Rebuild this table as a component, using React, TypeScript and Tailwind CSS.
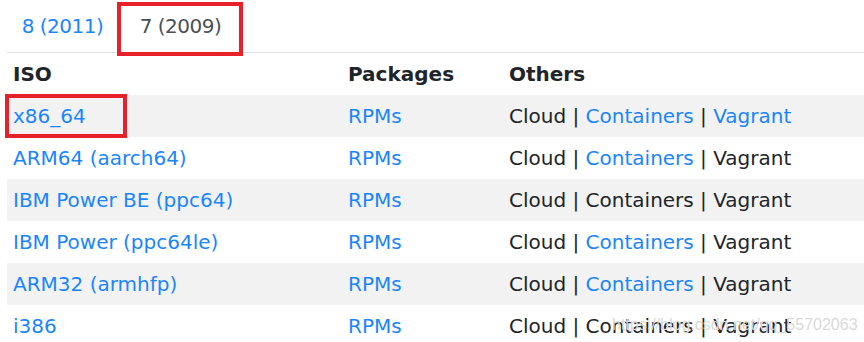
import React from "react";

const blue = "text-[#1b85ff]";

type Row = { iso: string; containers: boolean; vagrant: boolean; striped: boolean };

const rows: Row[] = [
  { iso: "x86_64", containers: true, vagrant: true, striped: true },
  { iso: "ARM64 (aarch64)", containers: true, vagrant: false, striped: false },
  { iso: "IBM Power BE (ppc64)", containers: false, vagrant: false, striped: true },
  { iso: "IBM Power (ppc64le)", containers: true, vagrant: false, striped: false },
  { iso: "ARM32 (armhfp)", containers: true, vagrant: false, striped: true },
  { iso: "i386", containers: false, vagrant: false, striped: false },
];

export default function App() {
  return (
    <div
      className="relative w-[864px] h-[342px] overflow-hidden bg-white text-[#212529] text-[20px]"
      style={{ fontFamily: '"DejaVu Sans", "Open Sans", sans-serif' }}
    >
      <div className="ml-[7px] flex h-[53px] border-b border-[#dee2e6]">
        <div className={`w-[111px] flex items-center justify-center tracking-[-0.5px] ${blue}`}>8 (2011)</div>
        <div className="w-[125px] flex items-center justify-center tracking-[-0.5px] text-[#495057]">7 (2009)</div>
      </div>
      <div className="ml-[7px]">
        <div className="grid grid-cols-[335px_161px_1fr] h-[42px] items-center font-bold">
          <div className="pl-[6px]">ISO</div>
          <div className="pl-[6px]">Packages</div>
          <div className="pl-[6px]">Others</div>
        </div>
        {rows.map((r) => (
          <div
            key={r.iso}
            className={`grid grid-cols-[335px_161px_1fr] h-[42px] items-center ${r.striped ? "bg-[#f2f2f2]" : ""}`}
          >
            <div className={`pl-[6px] ${blue}`}>{r.iso}</div>
            <div className={`pl-[6px] ${blue}`}>RPMs</div>
            <div className="pl-[6px] whitespace-nowrap">
              Cloud | <span className={r.containers ? blue : ""}>Containers</span> |{" "}
              <span className={r.vagrant ? blue : ""}>Vagrant</span>
            </div>
          </div>
        ))}
      </div>
      <div className="absolute left-[117px] top-[2px] w-[126px] h-[54px] border-4 border-[#e8202a]" />
      <div className="absolute left-[5px] top-[94px] w-[122px] h-[44px] border-4 border-[#e8202a]" />
      <div
        className="absolute left-[612px] top-[313px] text-[16px] text-[#d9d9d9] whitespace-nowrap"
        style={{ fontFamily: '"Liberation Sans", Arial, sans-serif' }}
      >
        https://blog.csdn.net/qq_55702063
      </div>
    </div>
  );
}
